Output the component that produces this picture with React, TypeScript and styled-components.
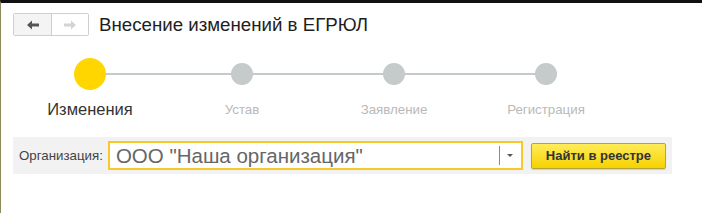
import { FC } from "react"
import styled, { createGlobalStyle } from "styled-components"

const GlobalStyle = createGlobalStyle`
  html, body {
    margin: 0;
    padding: 0;
    background: #fff;
    font-family: "Liberation Sans", Arial, sans-serif;
  }
`

const steps = ["Изменения", "Устав", "Заявление", "Регистрация"]

const Page = styled.div`
  width: 702px;
  height: 213px;
  box-sizing: border-box;
  border-top: 3px solid #111;
  border-left: 1px solid #8c8a5c;
  overflow: hidden;
`

const Header = styled.header`
  display: flex;
  align-items: center;
  gap: 10px;
  padding: 10px 0 0 12px;
  height: 23px;
`

const NavGroup = styled.div`
  display: flex;
  height: 23px;
  border: 1px solid #cfcfcf;
  border-radius: 2px;
  box-sizing: border-box;
  background: #fff;
`

const NavButton = styled.button<{ $disabled?: boolean }>`
  width: 37px;
  height: 100%;
  padding: 0;
  border: none;
  background: ${(p) => (p.$disabled ? "#fff" : "#f4f4f4")};
  display: grid;
  place-items: center;
  & + & {
    border-left: 1px solid #cfcfcf;
  }
`

const Title = styled.h1`
  margin: 0;
  font-size: 18.7px;
  font-weight: normal;
  color: #1e1e1e;
`

const Stepper = styled.div`
  position: relative;
  display: grid;
  grid-template-columns: repeat(4, 152px);
  margin: 22px 0 0 13px;
`

const StepLine = styled.div`
  position: absolute;
  top: 15px;
  left: 76px;
  width: 456px;
  height: 2px;
  background: #c4c9cb;
`

const Step = styled.div`
  position: relative;
  display: flex;
  flex-direction: column;
  align-items: center;
`

const Dot = styled.div<{ $active?: boolean }>`
  height: 32px;
  display: grid;
  place-items: center;
  &::before {
    content: "";
    display: block;
    width: ${(p) => (p.$active ? 32 : 22)}px;
    height: ${(p) => (p.$active ? 32 : 22)}px;
    border-radius: 50%;
    background: ${(p) => (p.$active ? "#ffd600" : "#c5cacb")};
  }
`

const StepLabel = styled.span<{ $active?: boolean }>`
  margin-top: ${(p) => (p.$active ? 10 : 12)}px;
  font-size: ${(p) => (p.$active ? 16.5 : 13.3)}px;
  color: ${(p) => (p.$active ? "#333" : "#b9b9b9")};
  white-space: nowrap;
`

const FormRow = styled.div`
  display: flex;
  align-items: center;
  width: 659px;
  height: 37px;
  margin: 18px 0 0 12px;
  padding: 0 0 0 6px;
  box-sizing: border-box;
  background: #f2f2f2;
`

const Label = styled.label`
  font-size: 13.3px;
  color: #444;
  margin-right: 5px;
`

const Combo = styled.div`
  display: flex;
  align-items: center;
  width: 415px;
  height: 29px;
  box-sizing: border-box;
  border: 2px solid #f7c92a;
  background: #fff;
`

const ComboText = styled.span`
  flex: 1;
  padding-left: 6px;
  font-size: 20.5px;
  color: #666;
  white-space: nowrap;
`

const ComboArrow = styled.div`
  width: 21px;
  height: 19px;
  border-left: 1px solid #8a8a8a;
  display: grid;
  place-items: center;
  &::before {
    content: "";
    border-left: 3px solid transparent;
    border-right: 3px solid transparent;
    border-top: 3px solid #555;
  }
`

const FindButton = styled.button`
  margin-left: 8px;
  width: 135px;
  height: 26px;
  border: 1px solid #b7a33a;
  border-radius: 2px;
  background: linear-gradient(#ffec5a, #f6d200);
  font-family: "Liberation Sans", Arial, sans-serif;
  font-size: 13px;
  font-weight: bold;
  color: #333;
  box-shadow: 0 1px 1px rgba(0, 0, 0, 0.15);
  padding: 0;
`

const Arrow: FC<{ dir: "left" | "right"; color: string }> = ({ dir, color }) => (
  <svg width="12" height="10" viewBox="0 0 12 10">
    <g transform={dir === "right" ? "translate(12 0) scale(-1 1)" : undefined}>
      <path d="M0 5 L5 0.5 V3.5 H12 V6.5 H5 V9.5 Z" fill={color} />
    </g>
  </svg>
)

export default function App() {
  return (
    <>
      <GlobalStyle />
      <Page>
        <Header>
          <NavGroup>
            <NavButton>
              <Arrow dir="left" color="#555" />
            </NavButton>
            <NavButton $disabled>
              <Arrow dir="right" color="#d4d4d4" />
            </NavButton>
          </NavGroup>
          <Title>Внесение изменений в ЕГРЮЛ</Title>
        </Header>
        <Stepper>
          <StepLine />
          {steps.map((s, i) => (
            <Step key={s}>
              <Dot $active={i === 0} />
              <StepLabel $active={i === 0}>{s}</StepLabel>
            </Step>
          ))}
        </Stepper>
        <FormRow>
          <Label>Организация:</Label>
          <Combo>
            <ComboText>ООО "Наша организация"</ComboText>
            <ComboArrow />
          </Combo>
          <FindButton>Найти в реестре</FindButton>
        </FormRow>
      </Page>
    </>
  )
}
